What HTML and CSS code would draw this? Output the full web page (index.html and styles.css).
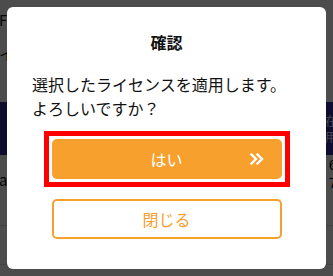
FILE: index.html
```html
<!DOCTYPE html>
<html lang="ja">
<head>
<meta charset="utf-8">
<link rel="stylesheet" href="styles.css">
</head>
<body>
<div class="page">
  <div class="row r1"><span class="lt">F</span></div>
  <div class="row r2"><span class="lt">イ</span></div>
  <div class="band">
    <span></span>
    <span class="rt band-txt"><span class="ln">在</span><span class="ln">用</span></span>
  </div>
  <div class="row r3">
    <span class="lt">a</span>
    <span class="rt nums"><span class="ln">6</span><span class="ln">7</span></span>
  </div>
  <div class="row r4"></div>
  <div class="row r5"></div>
</div>

<div class="overlay">
  <div class="modal">
    <h1 class="title">確認</h1>
    <p class="msg">選択したライセンスを適用します。<br>よろしいですか？</p>
    <div class="actions">
      <div class="focus-ring">
        <button class="btn btn-primary">はい
          <svg class="chev" width="14" height="12" viewBox="0 0 14 12" aria-hidden="true">
            <path d="M1.5 1.5 L6 6 L1.5 10.5 M7.5 1.5 L12 6 L7.5 10.5" fill="none" stroke="#fff" stroke-width="2.4" stroke-linecap="square"/>
          </svg>
        </button>
      </div>
      <button class="btn btn-secondary">閉じる</button>
    </div>
  </div>
</div>
</body>
</html>
```

FILE: styles.css
```css
html, body {
  margin: 0;
  padding: 0;
}
body {
  width: 333px;
  height: 276px;
  overflow: hidden;
  background: #fff;
  font-family: "Noto Sans CJK JP", "Noto Sans", sans-serif;
}
.page {
  display: flex;
  flex-direction: column;
  width: 333px;
  height: 276px;
}
.row {
  display: flex;
  justify-content: space-between;
  align-items: flex-start;
  font-size: 15px;
  color: #111;
}
.r1 { height: 40px; padding-top: 10px; box-sizing: border-box; }
.r2 { height: 62px; padding-top: 4px; box-sizing: border-box; }
.lt { margin-left: -1px; line-height: 20px; }
.rt {
  margin-right: -4px;
  display: flex;
  flex-direction: column;
}
.ln { display: block; }
.band {
  height: 53px;
  background: #302e9c;
  display: flex;
  justify-content: space-between;
  align-items: center;
  color: #e8e6ff;
  font-size: 12px;
}
.band-txt .ln { height: 16px; line-height: 16px; overflow: hidden; }
.r3 {
  height: 71px;
  box-sizing: border-box;
  border-bottom: 1px solid #ddd;
}
.r3 .lt { margin-top: 15px; }
.nums {
  margin-top: 1px;
  font-family: "Liberation Sans", sans-serif;
}
.nums .ln { height: 18px; line-height: 18px; }
.r4 { height: 38px; border-bottom: 1px solid #ddd; }
.r5 { flex: 1; }

.overlay {
  position: fixed;
  inset: 0;
  background: rgba(0, 0, 0, 0.7);
  display: flex;
  align-items: flex-start;
  justify-content: center;
  padding-top: 7px;
}
.modal {
  width: 319px;
  height: 262px;
  box-sizing: border-box;
  background: #fff;
  border-radius: 6px;
  padding: 23px 25px 0;
  display: flex;
  flex-direction: column;
}
.title {
  margin: 0;
  font-size: 16px;
  font-weight: 700;
  line-height: 24px;
  text-align: center;
  color: #111;
}
.msg {
  margin: 18px 0 0;
  font-size: 16px;
  line-height: 24px;
  color: #111;
}
.actions {
  margin-top: 11px;
  display: flex;
  flex-direction: column;
  align-items: center;
  gap: 12px;
}
.focus-ring {
  border: 5px solid #ff0000;
  padding: 3px;
  display: flex;
}
.btn {
  width: 230px;
  height: 40px;
  box-sizing: border-box;
  font-family: inherit;
  font-size: 16px;
  border-radius: 5px;
  display: flex;
  align-items: center;
  justify-content: center;
  padding: 0;
  cursor: pointer;
}
.btn-primary {
  position: relative;
  background: #f7a02d;
  border: none;
  color: #fff;
}
.chev {
  position: absolute;
  right: 18px;
  top: 14px;
}
.btn-secondary {
  background: #fff;
  border: 2px solid #f7a02d;
  color: #f7a02d;
}
```
